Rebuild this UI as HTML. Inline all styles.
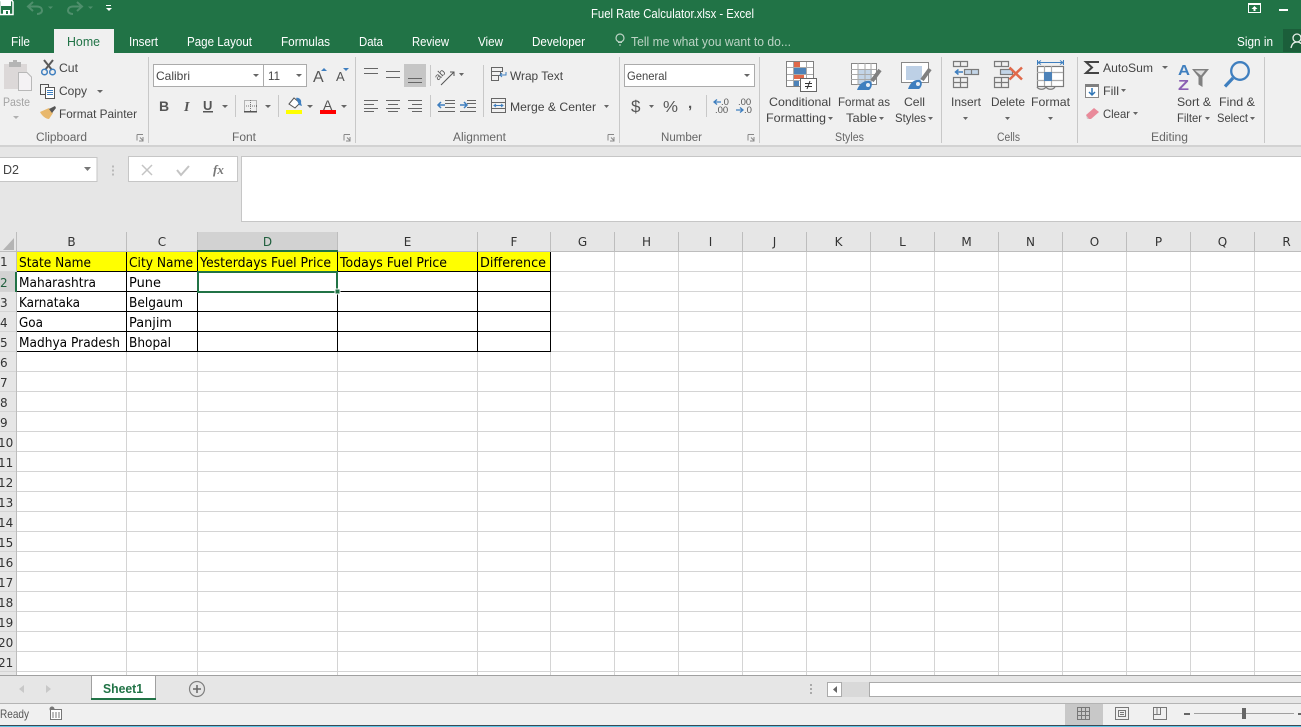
<!DOCTYPE html>
<html><head><meta charset="utf-8"><title>Fuel Rate Calculator.xlsx - Excel</title>
<style>
html,body{margin:0;padding:0;width:1301px;height:727px;overflow:hidden;background:#fff}
svg{display:block}
text{font-family:"Liberation Sans",sans-serif;font-size:12px;fill:#444;white-space:pre}
.t{fill:#fff;font-size:12.5px}
.r{fill:#444;font-size:12px}
.g{fill:#666;font-size:11.5px}
.c{font-family:"DejaVu Sans",sans-serif;font-size:13px;fill:#000}
.h{font-family:"DejaVu Sans",sans-serif;font-size:12px;fill:#333}
</style></head><body>
<svg width="1301" height="727" viewBox="0 0 1301 727" xmlns="http://www.w3.org/2000/svg">
<!-- title bar -->
<rect width="1301" height="53" fill="#217346"/>
<path d="M0 0.500H12L13 2V14.500H0z" fill="none" stroke="#fff" stroke-width="1.500"/><rect x="1" y="1" width="10" height="5" fill="#fff"/><rect x="3" y="10" width="7" height="4.500" fill="#fff"/><rect x="6" y="11" width="2" height="3" fill="#217346"/>
<path d="M33 2L28 6.500L33 11M29 6.500H37C41 6.500 42 9 42 10.500C42 12.500 40 14 37 14" fill="none" stroke="#4f8f6c" stroke-width="2"/><path d="M48 6.500h5l-2.500 2.500z" fill="#4f8f6c"/>
<path d="M77 2L82 6.500L77 11M81 6.500H73C69 6.500 68 9 68 10.500C68 12.500 70 14 73 14" fill="none" stroke="#4f8f6c" stroke-width="2"/><path d="M88 6.500h5l-2.500 2.500z" fill="#4f8f6c"/>
<rect x="106" y="5" width="5" height="1" fill="#fff"/><path d="M106 8h6l-3 3z" fill="#fff"/>
<text class="t" x="591" y="18" textLength="163" lengthAdjust="spacingAndGlyphs">Fuel Rate Calculator.xlsx - Excel</text>
<rect x="1248.500" y="3.500" width="12" height="9" fill="none" stroke="#fff"/><rect x="1248" y="3" width="13" height="2" fill="#fff"/><path d="M1254.500 6l3 3h-2v2h-2v-2h-2z" fill="#fff"/>
<rect x="1279" y="9" width="9" height="2" fill="#fff"/>
<rect x="54" y="29" width="60" height="24" fill="#f0f0f0"/>
<text class="t" x="11" y="46" textLength="19" lengthAdjust="spacingAndGlyphs">File</text>
<text class="t" x="67" y="46" textLength="33" lengthAdjust="spacingAndGlyphs" style="fill:#217346">Home</text>
<text class="t" x="129" y="46" textLength="29" lengthAdjust="spacingAndGlyphs">Insert</text>
<text class="t" x="187" y="46" textLength="65" lengthAdjust="spacingAndGlyphs">Page Layout</text>
<text class="t" x="281" y="46" textLength="49" lengthAdjust="spacingAndGlyphs">Formulas</text>
<text class="t" x="359" y="46" textLength="24" lengthAdjust="spacingAndGlyphs">Data</text>
<text class="t" x="412" y="46" textLength="37" lengthAdjust="spacingAndGlyphs">Review</text>
<text class="t" x="478" y="46" textLength="25" lengthAdjust="spacingAndGlyphs">View</text>
<text class="t" x="532" y="46" textLength="53" lengthAdjust="spacingAndGlyphs">Developer</text>
<circle cx="620" cy="38" r="4" fill="none" stroke="#bcd4c5" stroke-width="1.2"/><path d="M618 42.500h4M619 45h2" stroke="#bcd4c5" fill="none"/>
<text class="t" x="631" y="46" textLength="160" lengthAdjust="spacingAndGlyphs" style="fill:#bcd4c5">Tell me what you want to do...</text>
<text class="t" x="1237" y="46" textLength="36" lengthAdjust="spacingAndGlyphs">Sign in</text>
<rect x="1283" y="29" width="18" height="23" fill="#1b5e3a"/><circle cx="1297" cy="38" r="4" fill="none" stroke="#e8f0ea" stroke-width="1.3"/><path d="M1291 48c1-5 4-6 6-6s4 1 4 2" fill="none" stroke="#e8f0ea" stroke-width="1.3"/>

<!-- ribbon -->
<rect y="53" width="1301" height="93" fill="#f0f0f0"/>
<rect y="145" width="1301" height="2" fill="#d2d2d2"/>
<g fill="#c8c8c8"><rect x="148" y="57" width="1" height="86"/><rect x="355" y="57" width="1" height="86"/><rect x="619" y="57" width="1" height="86"/><rect x="759" y="57" width="1" height="86"/><rect x="941" y="57" width="1" height="86"/><rect x="1077" y="57" width="1" height="86"/><rect x="1264" y="57" width="1" height="86"/></g>

<!-- clipboard -->
<rect x="4" y="64" width="23" height="25" fill="#dcd8d8"/><rect x="9" y="62" width="12" height="5" fill="#b5b5b5"/><rect x="13" y="60" width="4" height="3" fill="#b5b5b5"/>
<path d="M18.500 72.500H27L31.500 77V90.500H18.500z" fill="#f4f2f4" stroke="#b8b8b8"/>
<text class="r" x="3" y="106" textLength="27" lengthAdjust="spacingAndGlyphs" style="fill:#a3a3a3">Paste</text>
<path d="M13 116h6l-3 3z" fill="#b0b0b0"/>
<path d="M44 60L52 70M53 60L45 70" stroke="#5a5a5a" stroke-width="2" fill="none"/><circle cx="44.500" cy="72" r="2.800" fill="none" stroke="#3f7fbf" stroke-width="1.500"/><circle cx="52.500" cy="72" r="2.800" fill="none" stroke="#3f7fbf" stroke-width="1.500"/>
<text class="r" x="59" y="72" textLength="19" lengthAdjust="spacingAndGlyphs">Cut</text>
<rect x="40.500" y="84.500" width="8" height="10" fill="#f4f4f4" stroke="#555"/><rect x="45.500" y="87.500" width="9" height="11" fill="#fff" stroke="#555"/><path d="M47 90.500h6M47 92.500h6M47 94.500h6" stroke="#3f7fbf"/>
<text class="r" x="59" y="95" textLength="28" lengthAdjust="spacingAndGlyphs">Copy</text><path d="M97 90h6l-3 3z" fill="#666"/>
<path d="M40 112l9-4 4 5-4 6c-3 0-7-3-9-7z" fill="#e8b86d"/><path d="M49 109l6-3 1 2-4 5z" fill="#555"/>
<text class="r" x="59" y="118" textLength="78" lengthAdjust="spacingAndGlyphs">Format Painter</text>
<text class="g" x="36" y="141" textLength="51" lengthAdjust="spacingAndGlyphs">Clipboard</text>
<path d="M137 134.500h6M137 134.500v6M140 137.500l3 3M143 137v4h-4" stroke="#888" fill="none"/>

<!-- font -->
<rect x="153.500" y="64.500" width="110" height="22" fill="#fff" stroke="#ababab"/><rect x="263.500" y="64.500" width="43" height="22" fill="#fff" stroke="#ababab"/>
<text class="r" x="156" y="80" textLength="34" lengthAdjust="spacingAndGlyphs">Calibri</text><path d="M253 74h6l-3 3z" fill="#666"/>
<text class="r" x="268" y="80" textLength="12" lengthAdjust="spacingAndGlyphs">11</text><path d="M296 74h6l-3 3z" fill="#666"/>
<text x="313" y="82" style="font-size:16px;fill:#555">A</text><path d="M321 71h6l-3-3z" fill="#3f7fbf"/>
<text x="336" y="81" style="font-size:13px;fill:#555">A</text><path d="M343 68h6l-3 3z" fill="#3f7fbf"/>
<text x="159" y="111" style="font-weight:bold;font-size:14px;fill:#555">B</text>
<text x="184" y="111" style="font-style:italic;font-family:'Liberation Serif',serif;font-weight:bold;font-size:14px;fill:#555">I</text>
<text x="203" y="110" style="font-weight:bold;font-size:13px;fill:#555">U</text><rect x="203" y="111" width="10" height="1.500" fill="#555"/>
<path d="M222 105h6l-3 3z" fill="#666"/><rect x="235" y="95" width="1" height="22" fill="#c8c8c8"/>
<rect x="244.500" y="100.500" width="12" height="11" fill="none" stroke="#777" stroke-dasharray="1 1"/><path d="M250.500 100v12M244 106h13" stroke="#777" stroke-dasharray="1 1"/><rect x="244" y="111" width="13" height="1.500" fill="#555"/>
<path d="M265 105h6l-3 3z" fill="#666"/><rect x="278" y="95" width="1" height="22" fill="#c8c8c8"/>
<path d="M289 104l5-6 6 5-5 5z" fill="#fff" stroke="#555"/><path d="M296 98c3-1 6 2 5 5l1 3-3-1z" fill="#3f7fbf"/><rect x="286" y="110" width="16" height="4" fill="#ff0"/>
<path d="M307 105h6l-3 3z" fill="#666"/>
<text x="323" y="110" style="font-size:14px;fill:#555">A</text><rect x="320" y="110" width="16" height="4" fill="#f00"/>
<path d="M341 105h6l-3 3z" fill="#666"/>
<text class="g" x="232" y="141" textLength="24" lengthAdjust="spacingAndGlyphs">Font</text>
<path d="M344 134.500h6M344 134.500v6M347 137.500l3 3M350 137v4h-4" stroke="#888" fill="none"/>

<!-- alignment -->
<rect x="404" y="64" width="22" height="23" fill="#c6c6c6"/>
<path d="M364 68.500h14M364 73.500h14M386 71.500h14M386 77.500h14M408 78.500h14M408 82.500h14" stroke="#666"/>
<path d="M364 100.500h14M364 104.500h10M364 108.500h14M364 111.500h10M386 100.500h14M388 104.500h10M386 108.500h14M388 111.500h10M408 100.500h14M412 104.500h10M408 108.500h14M412 111.500h10" stroke="#666"/>
<rect x="430" y="65" width="1" height="21" fill="#c8c8c8"/><rect x="430" y="95" width="1" height="22" fill="#c8c8c8"/>
<text transform="rotate(-45 441 78)" x="437" y="78" style="font-size:10px;fill:#555">ab</text><path d="M441 85L454 72M450 72h4v4" stroke="#555" fill="none"/><path d="M459 73h5l-2.500 3z" fill="#666"/>
<path d="M445 100.500h10M445 103.500h10M445 107.500h10M438 111.500h17" stroke="#666" fill="none"/><path d="M438 105h7M441 102l-3 3 3 3" stroke="#3f7fbf" fill="none" stroke-width="1.500"/>
<path d="M467 100.500h9M467 103.500h9M467 107.500h9M460 111.500h16" stroke="#666"/><path d="M460 105h7M464 102l3 3-3 3" stroke="#3f7fbf" fill="none" stroke-width="1.500"/>
<rect x="483" y="65" width="1" height="52" fill="#c8c8c8"/>
<path d="M491.500 67.500h11v4h-11zM491.500 71.500h9v4h-9zM491.500 75.500h7v5h-7z" fill="none" stroke="#666"/><path d="M506 72v3h-6M502 73l-2 2 2 2" stroke="#3f7fbf" fill="none"/>
<text class="r" x="510" y="80" textLength="53" lengthAdjust="spacingAndGlyphs">Wrap Text</text>
<rect x="491.500" y="98.500" width="14" height="14" fill="none" stroke="#666"/><path d="M491 102.500h15M491 108.500h15" stroke="#666"/><path d="M494 105.500h9" stroke="#3f7fbf"/><path d="M496 104l-2 1.500 2 1.500M501 104l2 1.500-2 1.500" stroke="#3f7fbf" fill="none"/>
<text class="r" x="510" y="111" textLength="86" lengthAdjust="spacingAndGlyphs">Merge &amp; Center</text><path d="M604 105h5l-2.500 3z" fill="#666"/>
<text class="g" x="453" y="141" textLength="53" lengthAdjust="spacingAndGlyphs">Alignment</text>
<path d="M608 134.500h6M608 134.500v6M611 137.500l3 3M614 137v4h-4" stroke="#888" fill="none"/>

<!-- number -->
<rect x="624.500" y="64.500" width="130" height="22" fill="#fff" stroke="#ababab"/>
<text class="r" x="627" y="80" textLength="40" lengthAdjust="spacingAndGlyphs">General</text><path d="M744 74h6l-3 3z" fill="#666"/>
<text x="631" y="112" style="font-size:17px;fill:#555">$</text><path d="M649 105h5l-2.500 3z" fill="#666"/>
<text x="663" y="112" textLength="15" lengthAdjust="spacingAndGlyphs" style="font-size:16px;fill:#555">%</text><text x="688" y="108" style="font-size:15px;font-weight:bold;fill:#555">,</text>
<rect x="706" y="95" width="1" height="22" fill="#c8c8c8"/>
<text x="721" y="105" style="font-size:9.500px;fill:#555">.0</text><text x="715" y="113" style="font-size:9.500px;fill:#555">.00</text><path d="M714 102h7M717 99.500l-3 2.500 3 2.500" stroke="#3f7fbf" fill="none" stroke-width="1.300"/>
<text x="738" y="105" style="font-size:9.500px;fill:#555">.00</text><text x="744" y="113" style="font-size:9.500px;fill:#555">.0</text><path d="M736 110h7M740 107.500l3 2.500-3 2.500" stroke="#3f7fbf" fill="none" stroke-width="1.300"/>
<text class="g" x="661" y="141" textLength="41" lengthAdjust="spacingAndGlyphs">Number</text>
<path d="M748 134.500h6M748 134.500v6M751 137.500l3 3M754 137v4h-4" stroke="#888" fill="none"/>

<!-- styles -->
<rect x="786.500" y="61.500" width="27" height="25" fill="#fff" stroke="#808080"/>
<rect x="794" y="62" width="6" height="5" fill="#e0694a"/><rect x="794" y="68" width="12" height="6" fill="#4d82b8"/><rect x="794" y="74" width="10" height="5" fill="#e0694a"/><rect x="794" y="80" width="5" height="6" fill="#4d82b8"/>
<path d="M793.500 62v24M806.500 62v24M787 67.500h26M787 74.500h26M787 80.500h26" stroke="#aaa" fill="none"/>
<rect x="800.500" y="78.500" width="16" height="13" fill="#fff" stroke="#666"/><path d="M805 83.500h7M805 86.500h7M810 81l-3 8" stroke="#333" fill="none"/>
<text class="r" x="769" y="106" textLength="62" lengthAdjust="spacingAndGlyphs">Conditional</text>
<text class="r" x="766" y="122" textLength="60" lengthAdjust="spacingAndGlyphs">Formatting</text><path d="M828 117h5l-2.500 3z" fill="#666"/>
<rect x="851.500" y="63.500" width="25" height="21" fill="#fff" stroke="#888"/><rect x="858" y="69" width="14" height="15" fill="#c3d5e8"/>
<path d="M858 63v22M865 63v22M871 63v22M851 69.500h25M851 74.500h25M851 79.500h25" stroke="#aaa" fill="none"/>
<path d="M872 81l8-11" stroke="#808080" stroke-width="4"/><path d="M857 90c2-6 7-10 13-9 3 2 2 7-1 9z" fill="#3f7fbf"/><circle cx="868" cy="85" r="2" fill="#e8eef5"/>
<text class="r" x="838" y="106" textLength="52" lengthAdjust="spacingAndGlyphs">Format as</text>
<text class="r" x="846" y="122" textLength="31" lengthAdjust="spacingAndGlyphs">Table</text><path d="M879 117h5l-2.500 3z" fill="#666"/>
<rect x="901.500" y="62.500" width="27" height="20" fill="#fff" stroke="#888"/><rect x="906" y="66" width="16" height="14" fill="#bdd0e6"/>
<path d="M922 80l8-11" stroke="#808080" stroke-width="4"/><path d="M908 89c2-6 6-10 12-9 3 2 2 7-1 9z" fill="#3f7fbf"/><circle cx="918" cy="84" r="2" fill="#e8eef5"/>
<text class="r" x="904" y="106" textLength="21" lengthAdjust="spacingAndGlyphs">Cell</text>
<text class="r" x="895" y="122" textLength="31" lengthAdjust="spacingAndGlyphs">Styles</text><path d="M928 117h5l-2.500 3z" fill="#666"/>
<text class="g" x="835" y="141" textLength="29" lengthAdjust="spacingAndGlyphs">Styles</text>

<!-- cells -->
<g fill="none" stroke="#7a7a7a" stroke-width="1.200">
<path d="M953.500 61.500h14v5h-14zM960.500 61v5"/><path d="M953.500 77.500h14v10h-14zM960.500 77v10M953 82.500h14"/>
<rect x="964.500" y="69.500" width="14" height="5" fill="#c3d5e8"/><path d="M971.500 69v5"/>
<path d="M994.500 61.500h14v5h-14zM1001.500 61v5"/><path d="M994.500 77.500h14v10h-14zM1001.500 77v10M994 82.500h14"/>
<rect x="1000.500" y="69.500" width="12" height="5" fill="#c3d5e8"/>
<rect x="1037.500" y="66.500" width="26" height="20" fill="#fff"/><path d="M1037 72.500h26M1037 80.500h26M1044.500 66v20M1051.500 66v20" stroke="#aaa"/>
<path d="M1037 87c2 3 7 3 9 0M1046 87c2 3 7 3 9 0"/>
</g>
<path d="M955 72h8M958.500 69.500l-3 2.500 3 2.500" stroke="#3f7fbf" fill="none" stroke-width="1.500"/>
<path d="M1009.500 67.500l12.500 12M1022 67.500l-12.500 12" stroke="#e0694a" stroke-width="2.500"/>
<rect x="1044" y="72" width="8" height="9" fill="#4d82b8"/><path d="M1037.500 60v5M1063.500 60v5M1038 62.500h25M1041 60.500l-3 2 3 2M1060 60.500l3 2-3 2" stroke="#3f7fbf" fill="none"/>
<text class="r" x="951" y="106" textLength="30" lengthAdjust="spacingAndGlyphs">Insert</text><path d="M963 117h5l-2.500 3z" fill="#666"/>
<text class="r" x="991" y="106" textLength="34" lengthAdjust="spacingAndGlyphs">Delete</text><path d="M1005 117h5l-2.500 3z" fill="#666"/>
<text class="r" x="1031" y="106" textLength="39" lengthAdjust="spacingAndGlyphs">Format</text><path d="M1048 117h5l-2.500 3z" fill="#666"/>
<text class="g" x="997" y="141" textLength="23" lengthAdjust="spacingAndGlyphs">Cells</text>

<!-- editing -->
<path d="M1099 62h-13l6 5.500-6 5.500h13" fill="none" stroke="#444" stroke-width="2"/>
<text class="r" x="1103" y="72" textLength="50" lengthAdjust="spacingAndGlyphs">AutoSum</text><path d="M1162 66h6l-3 3z" fill="#666"/>
<rect x="1085.500" y="84.500" width="13" height="13" fill="#fff" stroke="#888"/><rect x="1085" y="84" width="14" height="3" fill="#808080"/><path d="M1092 88v7M1089 92l3 3 3-3" stroke="#2f75b5" stroke-width="1.500" fill="none"/>
<text class="r" x="1103" y="95" textLength="16" lengthAdjust="spacingAndGlyphs">Fill</text><path d="M1121 89h5l-2.500 3z" fill="#666"/>
<path d="M1086 115l8-7 5 4-8 7h-3z" fill="#e98a9a"/><path d="M1086 115l3 4h-2z" fill="#d0d0d0"/>
<text class="r" x="1103" y="118" textLength="27" lengthAdjust="spacingAndGlyphs">Clear</text><path d="M1133 112h5l-2.500 3z" fill="#666"/>
<text x="1178" y="75" textLength="12" lengthAdjust="spacingAndGlyphs" style="font-weight:bold;font-size:15px;fill:#3f7fbf">A</text><text x="1178" y="90" textLength="11" lengthAdjust="spacingAndGlyphs" style="font-weight:bold;font-size:15px;fill:#8b5fb3">Z</text>
<path d="M1192 69h17l-6.500 8v10l-4-2.500v-7.500z" fill="#808080"/><path d="M1195 70.500h10l-4 5z" fill="#ddd"/>
<circle cx="1240" cy="71" r="8.800" fill="none" stroke="#3f7fbf" stroke-width="2.300"/><path d="M1233 78l-8 8.500" stroke="#3f7fbf" stroke-width="3.200"/>
<text class="r" x="1177" y="106" textLength="34" lengthAdjust="spacingAndGlyphs">Sort &amp;</text>
<text class="r" x="1177" y="122" textLength="25" lengthAdjust="spacingAndGlyphs">Filter</text><path d="M1205 117h5l-2.500 3z" fill="#666"/>
<text class="r" x="1219" y="106" textLength="36" lengthAdjust="spacingAndGlyphs">Find &amp;</text>
<text class="r" x="1217" y="122" textLength="31" lengthAdjust="spacingAndGlyphs">Select</text><path d="M1250 117h5l-2.500 3z" fill="#666"/>
<text class="g" x="1151" y="141" textLength="37" lengthAdjust="spacingAndGlyphs">Editing</text>

<!-- formula bar -->
<rect y="147" width="1301" height="85" fill="#e6e6e6"/>
<rect x="-1" y="157.500" width="98" height="24" fill="#fff" stroke="#c6c6c6"/>
<text class="r" x="3" y="174" textLength="16" lengthAdjust="spacingAndGlyphs" style="font-size:12.500px">D2</text><path d="M84 167h7l-3.500 4z" fill="#777"/>
<path d="M113 165.500v2M113 169.500v2M113 173.500v2" stroke="#aaa" stroke-width="1.500"/>
<rect x="128.500" y="156.500" width="109" height="25" fill="#fff" stroke="#c6c6c6"/>
<path d="M142 165l10 10M152 165l-10 10" stroke="#c4c4c4" stroke-width="1.500" fill="none"/>
<path d="M177 170l4 5 8-9" stroke="#c4c4c4" stroke-width="2" fill="none"/>
<text x="213" y="174" style="font-family:'Liberation Serif',serif;font-style:italic;font-weight:bold;font-size:13px;fill:#777">fx</text>
<rect x="241.500" y="156.500" width="1062" height="65" fill="#fff" stroke="#c6c6c6"/>

<!-- grid -->
<rect y="232" width="1301" height="443" fill="#fff"/>
<rect y="232" width="1301" height="20" fill="#e6e6e6"/>
<rect y="232" width="17" height="443" fill="#e6e6e6"/>
<rect x="197" y="232" width="141" height="20" fill="#d2d2d2"/>
<rect y="272" width="16" height="20" fill="#d2d2d2"/>
<path d="M3 250L14 238V250z" fill="#b4b4b4"/>
<path fill="none" stroke="#d4d4d4" d="M16.500 232V675M126.500 232V675M197.500 232V675M337.500 232V675M477.500 232V675M550.500 232V675M614.500 232V675M678.500 232V675M742.500 232V675M806.500 232V675M870.500 232V675M934.500 232V675M998.500 232V675M1062.500 232V675M1126.500 232V675M1190.500 232V675M1254.500 232V675
M0 251.500H1301M0 271.500H1301M0 291.500H1301M0 311.500H1301M0 331.500H1301M0 351.500H1301M0 371.500H1301M0 391.500H1301M0 411.500H1301M0 431.500H1301M0 451.500H1301M0 471.500H1301M0 491.500H1301M0 511.500H1301M0 531.500H1301M0 551.500H1301M0 571.500H1301M0 591.500H1301M0 611.500H1301M0 631.500H1301M0 651.500H1301M0 671.500H1301"/>
<path fill="none" stroke="#bdbdbd" d="M16.500 232V252M126.500 232V252M197.500 232V252M337.500 232V252M477.500 232V252M550.500 232V252M614.500 232V252M678.500 232V252M742.500 232V252M806.500 232V252M870.500 232V252M934.500 232V252M998.500 232V252M1062.500 232V252M1126.500 232V252M1190.500 232V252M1254.500 232V252M16.500 232V675M0 251.500H1301"/>
<rect x="17" y="252" width="533" height="19" fill="#ff0"/>
<path fill="none" stroke="#000" d="M17 271.500H551M17 291.500H551M17 311.500H551M17 331.500H551M17 351.500H551M126.500 252V352M197.500 252V352M337.500 252V352M477.500 272V352M550.500 272V352"/>
<path fill="none" stroke="#000" d="M477.500 252V272M550.500 252V272"/>
<rect x="197" y="250" width="141" height="2" fill="#217346"/><rect x="15" y="272" width="2" height="20" fill="#217346"/>

<g text-anchor="middle">
<text class="h" x="71.500" y="246">B</text><text class="h" x="162" y="246">C</text><text class="h" x="267.500" y="246" style="fill:#1f5e3d">D</text><text class="h" x="407.500" y="246">E</text><text class="h" x="514" y="246">F</text><text class="h" x="582.500" y="246">G</text><text class="h" x="646.500" y="246">H</text><text class="h" x="710.500" y="246">I</text><text class="h" x="774.500" y="246">J</text><text class="h" x="838.500" y="246">K</text><text class="h" x="902.500" y="246">L</text><text class="h" x="966.500" y="246">M</text><text class="h" x="1030.500" y="246">N</text><text class="h" x="1094.500" y="246">O</text><text class="h" x="1158.500" y="246">P</text><text class="h" x="1222.500" y="246">Q</text><text class="h" x="1286.500" y="246">R</text>
</g>
<g>
<text class="h" x="0" y="266">1</text><text class="h" x="0" y="287" style="fill:#1f5e3d">2</text><text class="h" x="0" y="307">3</text><text class="h" x="0" y="327">4</text><text class="h" x="0" y="347">5</text><text class="h" x="0" y="367">6</text><text class="h" x="0" y="387">7</text><text class="h" x="0" y="407">8</text><text class="h" x="0" y="427">9</text><text class="h" x="-2" y="447">10</text><text class="h" x="-2" y="467">11</text><text class="h" x="-2" y="487">12</text><text class="h" x="-2" y="507">13</text><text class="h" x="-2" y="527">14</text><text class="h" x="-2" y="547">15</text><text class="h" x="-2" y="567">16</text><text class="h" x="-2" y="587">17</text><text class="h" x="-2" y="607">18</text><text class="h" x="-2" y="627">19</text><text class="h" x="-2" y="647">20</text><text class="h" x="-2" y="667">21</text>
</g>
<text class="c" x="19" y="267" textLength="72" lengthAdjust="spacingAndGlyphs">State Name</text>
<text class="c" x="129" y="267" textLength="64" lengthAdjust="spacingAndGlyphs">City Name</text>
<text class="c" x="200" y="267" textLength="131" lengthAdjust="spacingAndGlyphs">Yesterdays Fuel Price</text>
<text class="c" x="340" y="267" textLength="107" lengthAdjust="spacingAndGlyphs">Todays Fuel Price</text>
<text class="c" x="480" y="267" textLength="66" lengthAdjust="spacingAndGlyphs">Difference</text>
<text class="c" x="19" y="287" textLength="77" lengthAdjust="spacingAndGlyphs">Maharashtra</text>
<text class="c" x="129" y="287" textLength="32" lengthAdjust="spacingAndGlyphs">Pune</text>
<text class="c" x="19" y="307" textLength="61" lengthAdjust="spacingAndGlyphs">Karnataka</text>
<text class="c" x="129" y="307" textLength="54" lengthAdjust="spacingAndGlyphs">Belgaum</text>
<text class="c" x="19" y="327" textLength="24" lengthAdjust="spacingAndGlyphs">Goa</text>
<text class="c" x="129" y="327" textLength="43" lengthAdjust="spacingAndGlyphs">Panjim</text>
<text class="c" x="19" y="347" textLength="101" lengthAdjust="spacingAndGlyphs">Madhya Pradesh</text>
<text class="c" x="129" y="347" textLength="42" lengthAdjust="spacingAndGlyphs">Bhopal</text>
<rect x="198" y="272" width="139" height="20" fill="none" stroke="#217346" stroke-width="2"/>
<rect x="335" y="289" width="5" height="5" fill="#217346" stroke="#fff"/>

<!-- tab bar -->
<rect y="675" width="1301" height="28" fill="#e6e6e6"/>
<rect y="675" width="1301" height="1" fill="#a0a0a0"/>
<path d="M24 685v8l-5-4zM46 685v8l5-4z" fill="#c8c8c8"/>
<rect x="91.500" y="675.500" width="64" height="23" fill="#fff" stroke="#a0a0a0"/>
<rect x="91" y="698" width="65" height="2" fill="#217346"/>
<text x="103" y="693" textLength="40" lengthAdjust="spacingAndGlyphs" style="font-weight:bold;font-size:13px;fill:#217346">Sheet1</text>
<circle cx="197" cy="689" r="7.500" fill="none" stroke="#808080" stroke-width="1.200"/><path d="M193 689h8M197 685v8" stroke="#666" stroke-width="1.500"/>
<path d="M811 684v2M811 688v2M811 692v2" stroke="#aaa" stroke-width="2"/>
<rect x="842" y="682" width="27" height="15" fill="#d9d9d9"/>
<rect x="827.500" y="682.500" width="14" height="14" fill="#fff" stroke="#ababab"/><path d="M837 686v7l-4-3.500z" fill="#666"/>
<rect x="869.500" y="682.500" width="440" height="14" fill="#fff" stroke="#ababab"/>

<!-- status bar -->
<rect y="703" width="1301" height="22" fill="#f0f0f0"/>
<rect y="703" width="1301" height="1" fill="#b4b4b4"/>
<rect y="725" width="1301" height="1" fill="#3a4a55"/><rect y="726" width="1301" height="1" fill="#5fc4e6"/>
<text class="r" x="0" y="718" textLength="29" lengthAdjust="spacingAndGlyphs" style="fill:#555">Ready</text>
<circle cx="52" cy="709" r="2.500" fill="#777"/><path d="M50.500 709.500H61.500V719.500H50.500z" fill="#fff" stroke="#777"/><path d="M52 713h2M55 713h2M58 713h2M52 715h2M55 715h2M58 715h2M52 717h2M55 717h2M58 717h2" stroke="#777"/>
<rect x="1065" y="704" width="38" height="21" fill="#c8c8c8"/>
<path d="M1077.500 707.500h12v12h-12zM1081.500 707v13M1085.500 707v13M1077 711.500h13M1077 715.500h13" fill="none" stroke="#777"/>
<path d="M1115.500 707.500h13v12h-13zM1118.500 710.500h7v6h-7zM1120 712.500h4M1120 714.500h4" fill="none" stroke="#777"/>
<path d="M1153.500 707.500h13v12h-13zM1153 714.500h7.500V707.500M1157 707.500v7" fill="none" stroke="#777"/>
<rect x="1184" y="713" width="6" height="2" fill="#666"/><rect x="1194" y="713" width="100" height="1" fill="#a0a0a0"/><rect x="1242" y="708" width="4" height="11" fill="#666"/><rect x="1298" y="713" width="3" height="2" fill="#666"/>
</svg>
</body></html>
